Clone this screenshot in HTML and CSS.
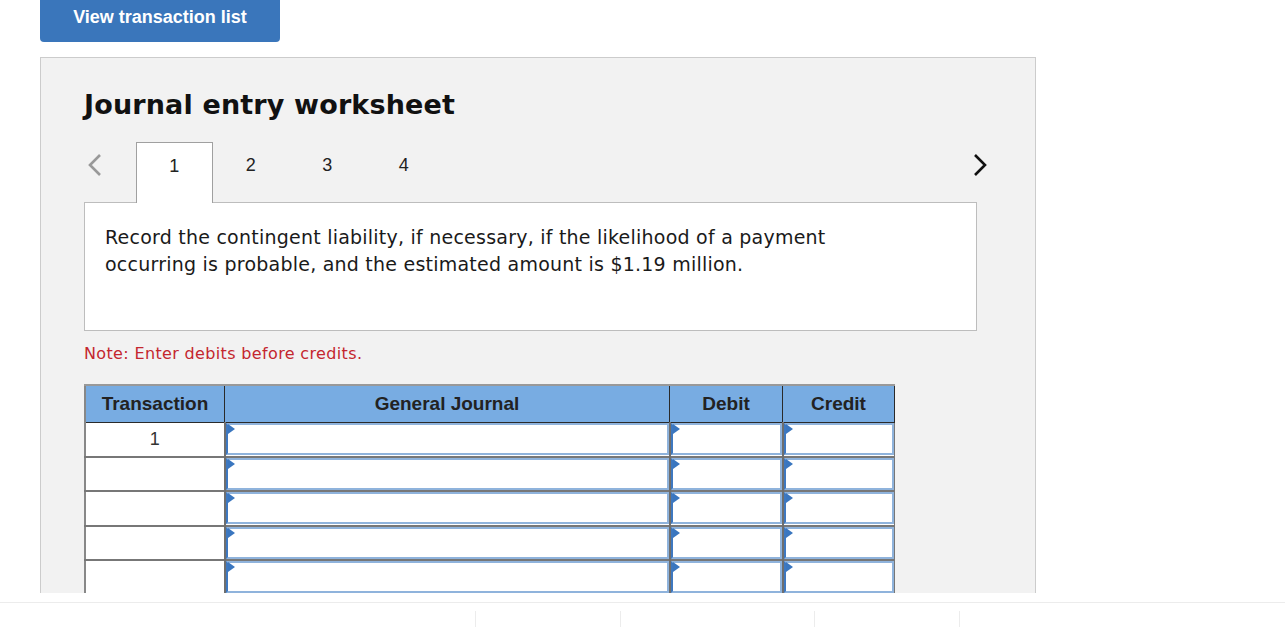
FILE: index.html
```html
<!DOCTYPE html>
<html>
<head>
<meta charset="utf-8">
<link rel="stylesheet" href="styles.css">
</head>
<body>
<div class="main">
  <button class="btn">View transaction list</button>
  <div class="panel">
    <h1 class="title">Journal entry worksheet</h1>
    <div class="tabrow">
      <span class="chev chev-left"><svg width="16" height="24" viewBox="0 0 16 24"><polyline points="13,2 3,12 13,22" fill="none" stroke="#999" stroke-width="2.6"/></svg></span>
      <div class="tabs">
        <div class="tab active">1</div>
        <div class="tab">2</div>
        <div class="tab">3</div>
        <div class="tab">4</div>
      </div>
      <span class="chev chev-right"><svg width="16" height="24" viewBox="0 0 16 24"><polyline points="3,2 13,12 3,22" fill="none" stroke="#111" stroke-width="2.6"/></svg></span>
    </div>
    <div class="desc">Record the contingent liability, if necessary, if the likelihood of a payment occurring is probable, and the estimated amount is $1.19 million.</div>
    <p class="note">Note: Enter debits before credits.</p>
    <table class="journal">
      <thead>
        <tr>
          <th class="c-tr">Transaction</th>
          <th class="c-gj">General Journal</th>
          <th class="c-dr">Debit</th>
          <th class="c-cr">Credit</th>
        </tr>
      </thead>
      <tbody>
        <tr><td class="num">1</td><td class="in"><div class="inp"></div></td><td class="in"><div class="inp"></div></td><td class="in"><div class="inp"></div></td></tr>
        <tr><td class="num"></td><td class="in"><div class="inp"></div></td><td class="in"><div class="inp"></div></td><td class="in"><div class="inp"></div></td></tr>
        <tr><td class="num"></td><td class="in"><div class="inp"></div></td><td class="in"><div class="inp"></div></td><td class="in"><div class="inp"></div></td></tr>
        <tr><td class="num"></td><td class="in"><div class="inp"></div></td><td class="in"><div class="inp"></div></td><td class="in"><div class="inp"></div></td></tr>
        <tr><td class="num"></td><td class="in"><div class="inp"></div></td><td class="in"><div class="inp"></div></td><td class="in"><div class="inp"></div></td></tr>
        <tr><td class="num"></td><td class="in"><div class="inp"></div></td><td class="in"><div class="inp"></div></td><td class="in"><div class="inp"></div></td></tr>
      </tbody>
    </table>
  </div>
</div>
<div class="gap"></div>
<div class="footer">
  <div class="fitem w1"></div>
  <div class="fitem w2"></div>
  <div class="fitem w1"></div>
</div>
</body>
</html>
```

FILE: styles.css
```css
html, body {
  margin: 0;
  padding: 0;
  background: #fff;
}
body {
  font-family: "DejaVu Sans", Verdana, sans-serif;
  color: #222;
  overflow: hidden;
}
.main {
  height: 593px;
  overflow: hidden;
  padding-left: 40px;
  box-sizing: border-box;
}
.btn {
  display: block;
  width: 240px;
  height: 42px;
  border: none;
  border-radius: 0 0 4px 4px;
  background: #3a76bb;
  color: #fff;
  font-family: "Liberation Sans", Arial, sans-serif;
  font-weight: bold;
  font-size: 18px;
  padding: 0 0 8px;
  margin: 0;
}
.panel {
  margin-top: 15px;
  width: 996px;
  box-sizing: border-box;
  background: #f2f2f2;
  border: 1px solid #cccccc;
  padding: 31px 0 40px 43px;
  min-height: 700px;
}
.title {
  margin: 0;
  font-size: 27px;
  letter-spacing: 0.15px;
  line-height: 32px;
  font-weight: bold;
  color: #111;
}
.tabrow {
  display: flex;
  align-items: flex-start;
  margin-top: 21px;
  position: relative;
  z-index: 2;
  height: 60px;
}
.chev {
  display: block;
  margin-top: 11px;
  height: 24px;
}
.chev-left {
  margin-left: 3px;
  width: 49px;
}
.chev-right {
  margin-left: auto;
  margin-right: 47px;
}
.tabs {
  display: flex;
}
.tab {
  width: 76.5px;
  box-sizing: border-box;
  height: 61px;
  padding-top: 13px;
  text-align: center;
  font-family: "Liberation Sans", Arial, sans-serif;
  font-size: 18px;
  line-height: 20px;
  color: #222;
}
.tab.active {
  background: #fff;
  border: 1px solid #a0a0a0;
  border-bottom: none;
}
.desc {
  position: relative;
  z-index: 1;
  width: 893px;
  height: 129px;
  box-sizing: border-box;
  background: #fff;
  border: 1px solid #bdbdbd;
  padding: 21px 80px 0 20px;
  font-size: 19px;
  letter-spacing: 0.23px;
  line-height: 27px;
  color: #1a1a1a;
  margin-top: 0;
}
.note {
  margin: 12px 0 0;
  font-size: 16px;
  letter-spacing: 0.35px;
  line-height: 22px;
  color: #c4262e;
}
.journal {
  margin-top: 19px;
  border-collapse: collapse;
  table-layout: fixed;
  border-top: 2px solid #999;
  border-left: 2px solid #888;
}
.journal th {
  background: #78ace2;
  font-family: "Liberation Sans", Arial, sans-serif;
  font-weight: bold;
  font-size: 19px;
  color: #222;
  height: 36px;
  padding: 0;
  border: 1px solid #2a2a2a;
  border-top: none;
}
.journal th.c-tr { width: 138px; border-left: none; }
.journal th.c-gj { width: 444px; }
.journal th.c-dr { width: 112px; }
.journal th.c-cr { width: 111px; }
.journal td {
  border: 1px solid #777;
  border-width: 2px 1px 0 1px;
  height: 32.5px;
  padding: 0;
  background: #fff;
}
.journal tbody tr:first-child td {
  border-top: 1px solid #2a2a2a;
}
.journal td.num {
  border-left: none;
  text-align: center;
  font-family: "Liberation Sans", Arial, sans-serif;
  font-size: 18px;
  color: #333;
  vertical-align: top;
  padding-top: 6px;
  height: 26.5px;
}
.journal td.in {
  border-left: 2px solid #6e6e6e;
  padding: 0;
  vertical-align: top;
}
.inp {
  position: relative;
  height: 32px;
  box-sizing: border-box;
  border: 2px solid #8fb3dc;
  border-left: 2px solid #3e78c0;
  background: #fff;
}
.inp::before {
  content: "";
  position: absolute;
  left: 0;
  top: -1px;
  border-top: 5px solid transparent;
  border-bottom: 5px solid transparent;
  border-left: 7px solid #3a76bf;
}
.gap {
  height: 9px;
  background: #fff;
}
.footer {
  border-top: 1px solid #ececec;
  display: flex;
  padding-left: 475px;
  padding-top: 8px;
  height: 24px;
  background: #fff;
}
.fitem {
  border-left: 1px solid #ececec;
  height: 24px;
}
.fitem.w1 { width: 144px; }
.fitem.w2 { width: 193px; }
.fitem:last-child { border-right: 1px solid #ececec; }
```
